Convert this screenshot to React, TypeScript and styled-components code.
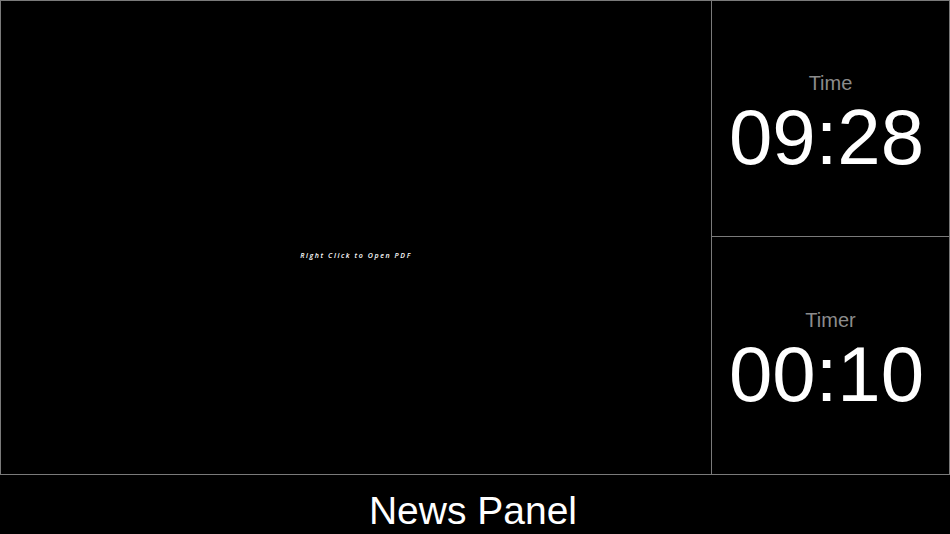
import React from "react";
import styled, { createGlobalStyle } from "styled-components";

const Global = createGlobalStyle`
  html, body { margin: 0; padding: 0; background: #000; }
  body { font-family: "Liberation Sans", Arial, sans-serif; color: #fff; overflow: hidden; }
  * { box-sizing: border-box; }
`;

const Page = styled.div`
  width: 950px;
  height: 534px;
  display: flex;
  flex-direction: column;
  background: #000;
`;

const Top = styled.div`
  height: 475px;
  display: grid;
  grid-template-columns: 711px 1fr;
  border: 1px solid #7a7a7a;
`;

const PdfPane = styled.div`
  border-right: 1px solid #7a7a7a;
  display: flex;
  align-items: center;
  justify-content: center;
  padding-top: 36px;
`;

const PdfHint = styled.span`
  font-family: "Open Sans", sans-serif;
  font-style: italic;
  font-weight: 600;
  font-size: 7px;
  letter-spacing: 1.6px;
  color: #fff;
`;

const Side = styled.div`
  display: grid;
  grid-template-rows: 236px 1fr;
`;

const Cell = styled.div<{ $divider?: boolean }>`
  display: flex;
  flex-direction: column;
  align-items: center;
  justify-content: center;
  padding-top: 15px;
  border-bottom: ${(p) => (p.$divider ? "1px solid #7a7a7a" : "none")};
`;

const Label = styled.div`
  font-size: 20px;
  line-height: 22px;
  color: #8c8c8c;
`;

const Clock = styled.div`
  font-size: 78px;
  line-height: 86px;
  margin-right: 8px;
  color: #fff;
`;

const News = styled.div`
  flex: 1;
  display: flex;
  justify-content: center;
  align-items: flex-start;
  padding-top: 14px;
  padding-right: 4px;
`;

const NewsText = styled.div`
  font-size: 39px;
  line-height: 44px;
  color: #fff;
`;

export default function App() {
  return (
    <Page>
      <Global />
      <Top>
        <PdfPane>
          <PdfHint>Right Click to Open PDF</PdfHint>
        </PdfPane>
        <Side>
          <Cell $divider>
            <Label>Time</Label>
            <Clock>09:28</Clock>
          </Cell>
          <Cell>
            <Label>Timer</Label>
            <Clock>00:10</Clock>
          </Cell>
        </Side>
      </Top>
      <News>
        <NewsText>News Panel</NewsText>
      </News>
    </Page>
  );
}
